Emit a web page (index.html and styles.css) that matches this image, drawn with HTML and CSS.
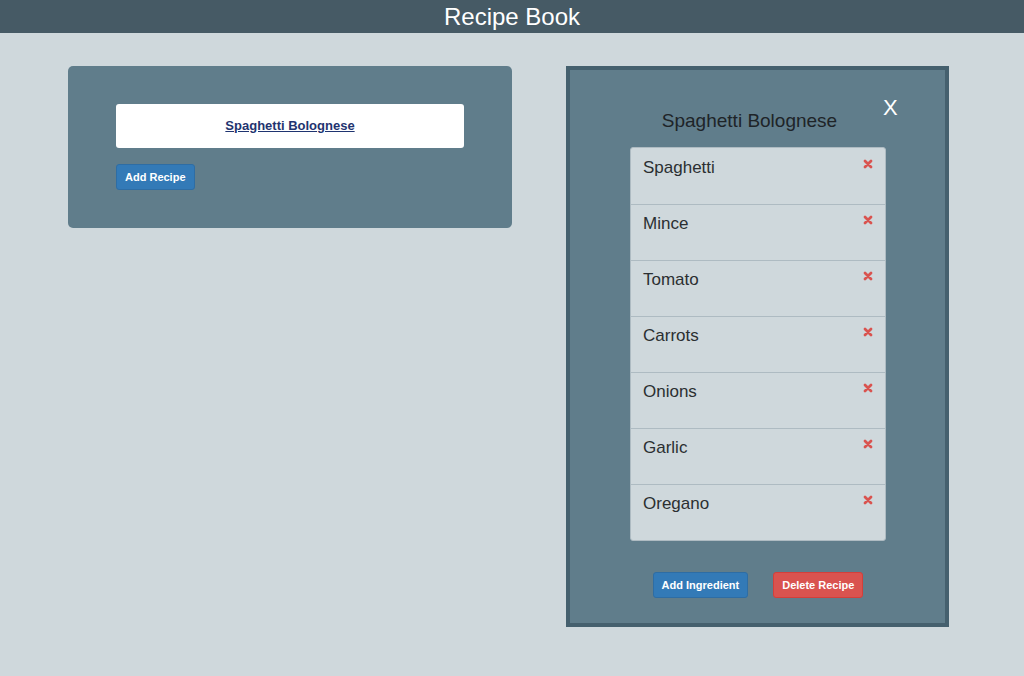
FILE: index.html
```html
<!DOCTYPE html>
<html>
<head>
<meta charset="utf-8">
<title>Recipe Book</title>
<link rel="stylesheet" href="styles.css">
</head>
<body>
<header class="topbar">
  <h1 class="topbar-title">Recipe Book</h1>
</header>
<main class="layout">
  <section class="recipes-panel">
    <div class="recipe-card">
      <a class="recipe-link" href="#">Spaghetti Bolognese</a>
    </div>
    <button class="btn btn-primary">Add Recipe</button>
  </section>
  <section class="detail-panel">
    <div class="detail-head">
      <h2 class="detail-title">Spaghetti Bolognese</h2>
      <span class="close-x">X</span>
    </div>
    <ul class="ingredients">
      <li class="ingredient"><span>Spaghetti</span><svg class="remove" viewBox="0 0 10 10"><path d="M2 2L8 8M8 2L2 8"/></svg></li>
      <li class="ingredient"><span>Mince</span><svg class="remove" viewBox="0 0 10 10"><path d="M2 2L8 8M8 2L2 8"/></svg></li>
      <li class="ingredient"><span>Tomato</span><svg class="remove" viewBox="0 0 10 10"><path d="M2 2L8 8M8 2L2 8"/></svg></li>
      <li class="ingredient"><span>Carrots</span><svg class="remove" viewBox="0 0 10 10"><path d="M2 2L8 8M8 2L2 8"/></svg></li>
      <li class="ingredient"><span>Onions</span><svg class="remove" viewBox="0 0 10 10"><path d="M2 2L8 8M8 2L2 8"/></svg></li>
      <li class="ingredient"><span>Garlic</span><svg class="remove" viewBox="0 0 10 10"><path d="M2 2L8 8M8 2L2 8"/></svg></li>
      <li class="ingredient"><span>Oregano</span><svg class="remove" viewBox="0 0 10 10"><path d="M2 2L8 8M8 2L2 8"/></svg></li>
    </ul>
    <div class="detail-actions">
      <button class="btn btn-primary">Add Ingredient</button>
      <button class="btn btn-danger">Delete Recipe</button>
    </div>
  </section>
</main>
</body>
</html>
```

FILE: styles.css
```css
* { box-sizing: border-box; }
html, body { margin: 0; padding: 0; }
body {
  background: #cfd8dc;
  font-family: "Liberation Sans", Arial, sans-serif;
  width: 1024px;
  height: 676px;
  overflow: hidden;
}
.topbar {
  background: #465a65;
  height: 33px;
  display: flex;
  align-items: center;
  justify-content: center;
}
.topbar-title {
  margin: 0;
  font-size: 24px;
  font-weight: normal;
  color: #fff;
  line-height: 33px;
}
.layout {
  display: flex;
  align-items: flex-start;
  padding: 33px 0 0 68px;
  gap: 54px;
}
.recipes-panel {
  width: 444px;
  background: #607d8b;
  border-radius: 5px;
  padding: 38px 48px 38px 48px;
}
.recipe-card {
  background: #fff;
  border-radius: 3px;
  height: 44px;
  display: flex;
  align-items: center;
  justify-content: center;
  margin-bottom: 16px;
}
.recipe-link {
  color: #1f3470;
  font-weight: bold;
  font-size: 13px;
  text-decoration: underline;
  margin-top: -2px;
}
.btn {
  font-family: "Liberation Sans", Arial, sans-serif;
  font-size: 11px;
  font-weight: bold;
  line-height: 16px;
  padding: 4px 8px;
  color: #fff;
  border: 1px solid transparent;
  border-radius: 3px;
  display: inline-block;
}
.btn-primary { background: #337ab7; border-color: #2e6da4; }
.btn-danger { background: #d9534f; border-color: #d43f3a; }

.detail-panel {
  width: 383px;
  height: 561px;
  background: #607d8b;
  border: 4px solid #45606e;
  padding: 25px 59px 25px 60px;
}
.detail-head {
  display: flex;
  align-items: flex-start;
  margin: 0 -14px 0 -14px;
}
.detail-title {
  flex: 1;
  margin: 15px 0 0 0;
  text-align: center;
  font-size: 19px;
  line-height: 22px;
  font-weight: normal;
  color: #1e2428;
}
.close-x {
  width: 17px;
  color: #fff;
  font-size: 22px;
  line-height: 26px;
}
.ingredients {
  list-style: none;
  margin: 15px 0 0 0;
  padding: 0;
  border: 1px solid #aebbc2;
  border-radius: 3px;
  background: #cfd8dc;
}
.ingredient {
  height: 56px;
  border-top: 1px solid #aebbc2;
  padding: 9px 12px 0 12px;
  display: flex;
  justify-content: space-between;
  align-items: flex-start;
  font-size: 17px;
  line-height: 20px;
  color: #2b2f31;
}
.ingredient:first-child { border-top: none; padding-top: 10px; }
.remove {
  width: 10px;
  height: 10px;
  margin-top: 1px;
  margin-right: 0;
  stroke: #d9534f;
  stroke-width: 2.8;
  stroke-linecap: round;
  fill: none;
}
.detail-actions {
  display: flex;
  justify-content: center;
  gap: 25px;
  margin-top: 31px;
}
```
